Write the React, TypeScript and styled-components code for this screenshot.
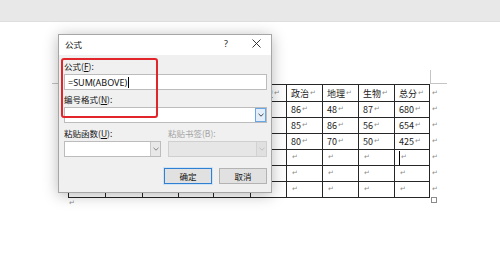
import React from "react";
import styled, { createGlobalStyle } from "styled-components";

const GlobalStyle = createGlobalStyle`
  html, body { margin: 0; padding: 0; background: #fff; }
  body { font-family: "Noto Sans", "Noto Sans CJK SC", sans-serif; color: #000; }
`;

const Screen = styled.div`
  width: 500px;
  height: 262px;
  display: flex;
  flex-direction: column;
  overflow: hidden;
  position: relative;
  background: #fff;
`;

const TopBar = styled.div`
  height: 22px;
  flex: none;
  box-sizing: border-box;
  background: #e8e8e8;
  border-bottom: 1px solid #dedede;
`;

const Doc = styled.div`
  flex: 1;
  padding: 62px 0 0 68px;
  font-family: "Noto Sans CJK SC", "Noto Sans", sans-serif;
`;

const TableLine = styled.div`
  display: flex;
  align-items: flex-start;
`;

const TableWrap = styled.div`
  position: relative;
  &::before {
    content: "";
    position: absolute;
    left: -16px;
    top: -14px;
    width: 15px;
    height: 13px;
    border-right: 1px solid #c4c4c4;
    border-bottom: 1px solid #c4c4c4;
  }
  &::after {
    content: "";
    position: absolute;
    left: 362px;
    top: -14px;
    width: 16px;
    height: 13px;
    border-left: 1px solid #c4c4c4;
    border-bottom: 1px solid #c4c4c4;
  }
`;

const Grid = styled.div`
  display: grid;
  grid-template-columns: 36px 36px 35px 34px 36px 35px 35px 35px 35px 34px;
  grid-template-rows: 16px repeat(6, 15px);
  gap: 1px;
  padding: 1px;
  background: #262626;
`;

const Cell = styled.div`
  background: #fff;
  display: flex;
  align-items: center;
  padding-left: 4px;
  font-size: 9px;
  line-height: 1;
  color: #1a1a1a;
  white-space: nowrap;
  overflow: hidden;
`;

const Mark = styled.span`
  font-family: "DejaVu Sans", sans-serif;
  font-size: 7px;
  line-height: 1;
  color: #8c8c8c;
  margin-left: 1px;
`;

const Cursor = styled.span`
  display: inline-block;
  width: 1px;
  height: 14px;
  background: #000;
`;

const MarkColumn = styled.div`
  display: grid;
  grid-template-rows: 16px repeat(6, 15px) 6px;
  row-gap: 1px;
  padding-top: 1px;
  margin-left: 1px;
`;

const MarkSlot = styled.div`
  display: flex;
  align-items: center;
`;

const Handle = styled.div`
  width: 4px;
  height: 4px;
  margin-top: -1px;
  border: 1px solid #8a8a8a;
  background: #fff;
`;

const AfterPara = styled.div`
  height: 10px;
  margin-top: -6px;
  display: flex;
  align-items: center;
`;

/* ---------- dialog ---------- */

const Dialog = styled.div`
  position: absolute;
  left: 58px;
  top: 34px;
  width: 214px;
  height: 159px;
  box-sizing: border-box;
  background: #f0f0f0;
  border: 1px solid #a6a6a6;
  box-shadow: 0 2px 14px rgba(0, 0, 0, 0.28);
  display: flex;
  flex-direction: column;
  font-family: "Noto Sans", "Noto Sans CJK SC", sans-serif;
  font-size: 8.5px;
`;

const TitleBar = styled.div`
  height: 20px;
  flex: none;
  background: #fff;
  display: flex;
  align-items: center;
  padding: 0 0 3px 6px;
  box-sizing: border-box;
`;

const TitleText = styled.div`
  flex: 1;
  font-family: "Noto Sans CJK SC", sans-serif;
  font-size: 8.5px;
  color: #111;
`;

const HelpBtn = styled.div`
  width: 20px;
  margin-right: 5px;
  text-align: center;
  font-size: 9px;
  color: #222;
`;

const CloseBtn = styled.div`
  width: 30px;
  display: flex;
  justify-content: center;
  align-items: center;
`;

const Body = styled.div`
  flex: 1;
  padding: 5px 4px 0 5px;
  display: flex;
  flex-direction: column;
`;

const Label = styled.div<{ $gap: number; $disabled?: boolean }>`
  height: 12px;
  line-height: 12px;
  margin-top: ${(p) => p.$gap}px;
  font-family: "Noto Sans CJK SC", sans-serif;
  font-size: 8.5px;
  color: ${(p) => (p.$disabled ? "#a3a3a3" : "#111")};
  white-space: nowrap;
  u { text-decoration-thickness: 1px; text-underline-offset: 1px; }
`;

const TextBox = styled.div<{ $gap: number }>`
  height: 16px;
  margin-top: ${(p) => p.$gap}px;
  box-sizing: border-box;
  border: 1px solid #bcbcbc;
  background: #fff;
  display: flex;
  align-items: center;
  padding-left: 3px;
  font-size: 9px;
  line-height: 1;
  color: #111;
`;

const Caret = styled.span`
  display: inline-block;
  width: 1px;
  height: 11px;
  background: #000;
  margin-left: 1px;
`;

const ComboRow = styled.div`
  display: flex;
  gap: 7px;
  margin-top: 2px;
`;

const LabelRow = styled.div`
  display: flex;
  gap: 7px;
  margin-top: 4px;
`;

const LabelCell = styled.div<{ $w: number }>`
  width: ${(p) => p.$w}px;
`;

const Combo = styled.div<{ $w?: number; $disabled?: boolean; $gap?: number }>`
  height: 16px;
  ${(p) => (p.$w ? `width: ${p.$w}px;` : "")}
  margin-top: ${(p) => p.$gap ?? 0}px;
  box-sizing: border-box;
  border: 1px solid ${(p) => (p.$disabled ? "#cfcfcf" : "#bcbcbc")};
  background: ${(p) => (p.$disabled ? "#e6e6e6" : "#fff")};
  display: flex;
`;

const ComboField = styled.div`
  flex: 1;
`;

const DropBtn = styled.div<{ $state: "focus" | "normal" | "disabled" }>`
  width: 10px;
  display: flex;
  align-items: center;
  justify-content: center;
  box-sizing: border-box;
  background: ${(p) =>
    p.$state === "focus" ? "#e3eef9" : p.$state === "disabled" ? "#e0e0e0" : "#e8e8e8"};
  border-left: 1px solid
    ${(p) => (p.$state === "focus" ? "#6aa6e4" : p.$state === "disabled" ? "#d2d2d2" : "#c9c9c9")};
  ${(p) =>
    p.$state === "focus"
      ? "outline: 1px solid #6aa6e4; outline-offset: -1px; width: 11px;"
      : ""}
`;

const ButtonRow = styled.div`
  display: flex;
  justify-content: flex-end;
  gap: 7px;
  margin-top: 11px;
`;

const Button = styled.div<{ $primary?: boolean }>`
  width: 48px;
  height: 16px;
  box-sizing: border-box;
  display: flex;
  align-items: center;
  justify-content: center;
  background: #e1e1e1;
  border: 1px solid ${(p) => (p.$primary ? "#2f7fd2" : "#b3b3b3")};
  ${(p) => (p.$primary ? "box-shadow: 0 0 0 1px #cfe3f6;" : "")}
  font-family: "Noto Sans CJK SC", sans-serif;
  font-size: 8.5px;
  line-height: 1;
  color: #111;
`;

const Highlight = styled.div`
  position: absolute;
  left: 2px;
  top: 23px;
  width: 97px;
  height: 60px;
  box-sizing: border-box;
  border: 2px solid #e2252b;
  border-radius: 3px;
  pointer-events: none;
`;

const Chevron = ({ color }: { color: string }) => (
  <svg width="6" height="4" viewBox="0 0 6 4">
    <polyline points="0.5,0.8 3,3.2 5.5,0.8" fill="none" stroke={color} strokeWidth="0.9" />
  </svg>
);

const CloseIcon = () => (
  <svg width="9" height="9" viewBox="0 0 9 9">
    <path d="M0.5 0.5 L8.5 8.5 M8.5 0.5 L0.5 8.5" stroke="#222" strokeWidth="0.9" />
  </svg>
);

const rows: string[][] = [
  ["姓名", "语文", "数学", "英语", "物理", "历史", "政治", "地理", "生物", "总分"],
  ["张三", "96", "92", "95", "88", "93", "86", "48", "87", "680"],
  ["李四", "94", "90", "91", "86", "89", "85", "86", "56", "654"],
  ["王五", "70", "55", "60", "40", "71", "80", "70", "50", "425"],
  ["", "", "", "", "", "", "", "", "", ""],
  ["", "", "", "", "", "", "", "", "", ""],
  ["", "", "", "", "", "", "", "", "", ""],
];

export default function App() {
  return (
    <Screen>
      <GlobalStyle />
      <TopBar />
      <Doc>
        <TableLine>
          <TableWrap>
            <Grid>
              {rows.map((r, ri) =>
                r.map((c, ci) => (
                  <Cell key={`${ri}-${ci}`}>
                    {ri === 4 && ci === 9 ? <Cursor /> : null}
                    {c}
                    <Mark>↵</Mark>
                  </Cell>
                ))
              )}
            </Grid>
          </TableWrap>
          <MarkColumn>
            {rows.map((_, i) => (
              <MarkSlot key={i}>
                <Mark>↵</Mark>
              </MarkSlot>
            ))}
            <Handle />
          </MarkColumn>
        </TableLine>
        <AfterPara>
          <Mark>↵</Mark>
        </AfterPara>
      </Doc>

      <Dialog>
        <TitleBar>
          <TitleText>公式</TitleText>
          <HelpBtn>?</HelpBtn>
          <CloseBtn>
            <CloseIcon />
          </CloseBtn>
        </TitleBar>
        <Body>
          <Label $gap={0}>
            公式(<u>F</u>):
          </Label>
          <TextBox $gap={2}>
            =SUM(ABOVE)
            <Caret />
          </TextBox>
          <Label $gap={3}>
            编号格式(<u>N</u>):
          </Label>
          <Combo $gap={2}>
            <ComboField />
            <DropBtn $state="focus">
              <Chevron color="#333" />
            </DropBtn>
          </Combo>
          <LabelRow>
            <LabelCell $w={97}>
              <Label $gap={0}>
                粘贴函数(<u>U</u>):
              </Label>
            </LabelCell>
            <LabelCell $w={99}>
              <Label $gap={0} $disabled>
                粘贴书签(B):
              </Label>
            </LabelCell>
          </LabelRow>
          <ComboRow>
            <Combo $w={97}>
              <ComboField />
              <DropBtn $state="normal">
                <Chevron color="#777" />
              </DropBtn>
            </Combo>
            <Combo $w={99} $disabled>
              <ComboField />
              <DropBtn $state="disabled">
                <Chevron color="#bdbdbd" />
              </DropBtn>
            </Combo>
          </ComboRow>
          <ButtonRow>
            <Button $primary>确定</Button>
            <Button>取消</Button>
          </ButtonRow>
        </Body>
        <Highlight />
      </Dialog>
    </Screen>
  );
}
